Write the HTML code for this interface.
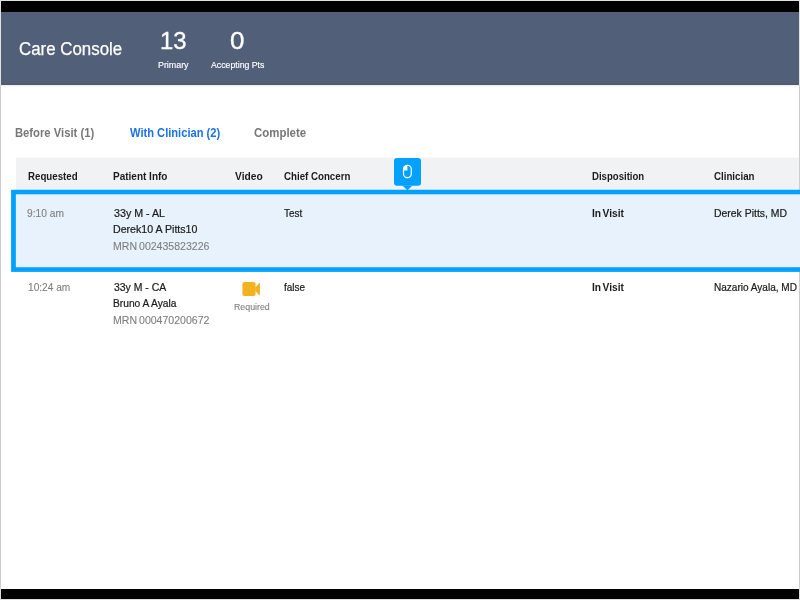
<!DOCTYPE html>
<html><head><meta charset="utf-8">
<style>
*{box-sizing:border-box;margin:0;padding:0}
html,body{width:800px;height:600px;overflow:hidden;background:#fff;font-family:"Liberation Sans",sans-serif;}
#wrap{position:absolute;left:0;top:0;width:800px;height:600px;overflow:hidden;will-change:transform;background:#fff}
.abs{position:absolute}
.t{position:absolute;white-space:nowrap;line-height:1;transform-origin:0 0}
#bg{position:absolute;left:0;top:0}
</style></head><body><div id="wrap">
<svg id="bg" width="800" height="600" viewBox="0 0 800 600">
<!-- outer frame -->
<rect x="0" y="0" width="800" height="600" fill="#cdcdcd"/>
<rect x="0" y="0" width="800" height="85" fill="#e0e0e0"/>
<rect x="0" y="588" width="800" height="12" fill="#dcdcdc"/>
<rect x="1" y="1" width="798" height="598" fill="#fff"/>
<!-- black bars -->
<rect x="1" y="1" width="798" height="11" fill="#000"/>
<rect x="1" y="589" width="798" height="10" fill="#000"/>
<!-- header -->
<rect x="1" y="85" width="798" height="1.6" fill="#000" opacity="0.06"/>
<rect x="1" y="12" width="798" height="72.8" fill="#515f78"/>
<rect x="1" y="83.8" width="798" height="1" fill="#46536c"/>
<!-- table head -->
<rect x="16" y="157.7" width="783" height="33" fill="#f1f2f4"/>
<!-- selected row -->
<rect x="11.1" y="189.75" width="800" height="82.15" fill="#03a1fe"/>
<rect x="15.85" y="194.3" width="800" height="72.9" fill="#e8f2fc"/>
<!-- mouse tooltip -->
<rect x="394" y="158.1" width="27" height="27.6" rx="3" fill="#03a1fe"/>
<path d="M402.3 185.4 L407.4 190.3 L412.5 185.4 Z" fill="#03a1fe"/>
<rect x="403.5" y="165.4" width="7.8" height="12.2" rx="3.9" fill="none" stroke="#fff" stroke-width="1.25"/>
<path d="M403.5 170.6 L407.4 170.6 L407.4 165.4 A3.9 3.9 0 0 0 403.5 169.3 Z" fill="#fff"/>
<!-- camera -->
<rect x="242.4" y="282" width="13.2" height="13.9" rx="2" fill="#f3b220"/>
<path d="M255.2 287.1 Q256.6 286.4 258.7 283.4 Q260 282.4 260 284 L260 294.1 Q260 295.8 258.7 294.7 Q256.6 291.8 255.2 290.9 Z" fill="#f3b220"/>
</svg>
<div class="t" id="cc" style="left:19.10px;top:40px;font-size:18px;font-weight:normal;color:#fff;transform:scaleX(0.9379);-webkit-text-stroke:0.25px #fff;">Care Console</div>
<div class="t" id="n13" style="left:159.76px;top:29px;font-size:24px;font-weight:normal;color:#fff;transform:scaleX(0.9958);-webkit-text-stroke:0.3px #fff;">13</div>
<div class="t" id="n0" style="left:230.19px;top:29px;font-size:24px;font-weight:normal;color:#fff;transform:scaleX(1.0851);-webkit-text-stroke:0.3px #fff;">0</div>
<div class="t" id="prim" style="left:157.96px;top:61px;font-size:9px;font-weight:normal;color:#fff;transform:scaleX(0.9851);-webkit-text-stroke:0.15px #fff;">Primary</div>
<div class="t" id="acc" style="left:211.00px;top:61px;font-size:9px;font-weight:normal;color:#fff;transform:scaleX(0.9699);-webkit-text-stroke:0.15px #fff;">Accepting Pts</div>
<div class="t" id="tab1" style="left:15.30px;top:126.5px;font-size:12px;font-weight:bold;color:#787878;transform:scaleX(0.9369);">Before Visit (1)</div>
<div class="t" id="tab2" style="left:129.50px;top:126.5px;font-size:12px;font-weight:bold;color:#1a73e8;transform:scaleX(0.9276);">With Clinician (2)</div>
<div class="t" id="tab3" style="left:253.77px;top:126.5px;font-size:12px;font-weight:bold;color:#787878;transform:scaleX(0.9535);">Complete</div>
<div class="t" id="h1" style="left:27.59px;top:171px;font-size:11px;font-weight:bold;color:#1b1b1b;transform:scaleX(0.8813);">Requested</div>
<div class="t" id="h2" style="left:112.82px;top:171px;font-size:11px;font-weight:bold;color:#1b1b1b;transform:scaleX(0.9089);">Patient Info</div>
<div class="t" id="h3" style="left:234.92px;top:171px;font-size:11px;font-weight:bold;color:#1b1b1b;transform:scaleX(0.9293);">Video</div>
<div class="t" id="h4" style="left:283.56px;top:171px;font-size:11px;font-weight:bold;color:#1b1b1b;transform:scaleX(0.8824);">Chief Concern</div>
<div class="t" id="h5" style="left:592.15px;top:171px;font-size:11px;font-weight:bold;color:#1b1b1b;transform:scaleX(0.8718);">Disposition</div>
<div class="t" id="h6" style="left:713.81px;top:171px;font-size:11px;font-weight:bold;color:#1b1b1b;transform:scaleX(0.8827);">Clinician</div>
<div class="t" id="r1a" style="left:27.04px;top:208px;font-size:11px;font-weight:normal;color:#808080;transform:scaleX(0.9286);-webkit-text-stroke:0.1px #787878;">9:10 am</div>
<div class="t" id="r1b" style="left:113.51px;top:208px;font-size:11px;font-weight:normal;color:#1b1b1b;transform:scaleX(0.9712);-webkit-text-stroke:0.22px #1b1b1b;">33y M - AL</div>
<div class="t" id="r1c" style="left:113.03px;top:224px;font-size:11px;font-weight:normal;color:#1b1b1b;transform:scaleX(0.9652);-webkit-text-stroke:0.22px #1b1b1b;">Derek10 A Pitts10</div>
<div class="t" id="r1d" style="left:112.79px;top:241px;font-size:11px;font-weight:normal;color:#808080;transform:scaleX(0.9596);word-spacing:-1px;-webkit-text-stroke:0.1px #787878;">MRN 002435823226</div>
<div class="t" id="r1e" style="left:283.77px;top:208px;font-size:11px;font-weight:normal;color:#1b1b1b;transform:scaleX(0.9000);-webkit-text-stroke:0.22px #1b1b1b;">Test</div>
<div class="t" id="r1f" style="left:592.20px;top:208px;font-size:11px;font-weight:bold;color:#1b1b1b;transform:scaleX(0.9284);word-spacing:-1.5px;">In Visit</div>
<div class="t" id="r1g" style="left:713.69px;top:208px;font-size:11px;font-weight:normal;color:#1b1b1b;transform:scaleX(0.9479);-webkit-text-stroke:0.22px #1b1b1b;">Derek Pitts, MD</div>
<div class="t" id="r2a" style="left:27.56px;top:282px;font-size:11px;font-weight:normal;color:#808080;transform:scaleX(0.9213);-webkit-text-stroke:0.1px #787878;">10:24 am</div>
<div class="t" id="r2b" style="left:113.51px;top:282px;font-size:11px;font-weight:normal;color:#1b1b1b;transform:scaleX(0.9498);-webkit-text-stroke:0.22px #1b1b1b;">33y M - CA</div>
<div class="t" id="r2c" style="left:113.05px;top:298px;font-size:11px;font-weight:normal;color:#1b1b1b;transform:scaleX(0.9299);-webkit-text-stroke:0.22px #1b1b1b;">Bruno A Ayala</div>
<div class="t" id="r2d" style="left:112.79px;top:315px;font-size:11px;font-weight:normal;color:#808080;transform:scaleX(0.9596);word-spacing:-1px;-webkit-text-stroke:0.1px #787878;">MRN 000470200672</div>
<div class="t" id="r2e" style="left:284.00px;top:282px;font-size:11px;font-weight:normal;color:#1b1b1b;transform:scaleX(0.9055);-webkit-text-stroke:0.22px #1b1b1b;">false</div>
<div class="t" id="r2f" style="left:592.20px;top:282px;font-size:11px;font-weight:bold;color:#1b1b1b;transform:scaleX(0.9284);word-spacing:-1.5px;">In Visit</div>
<div class="t" id="r2g" style="left:713.82px;top:282px;font-size:11px;font-weight:normal;color:#1b1b1b;transform:scaleX(0.9125);-webkit-text-stroke:0.22px #1b1b1b;">Nazario Ayala, MD</div>
<div class="t" id="req" style="left:233.77px;top:303px;font-size:9px;font-weight:normal;color:#808080;transform:scaleX(0.9787);-webkit-text-stroke:0.1px #787878;">Required</div>
</div></body></html>
